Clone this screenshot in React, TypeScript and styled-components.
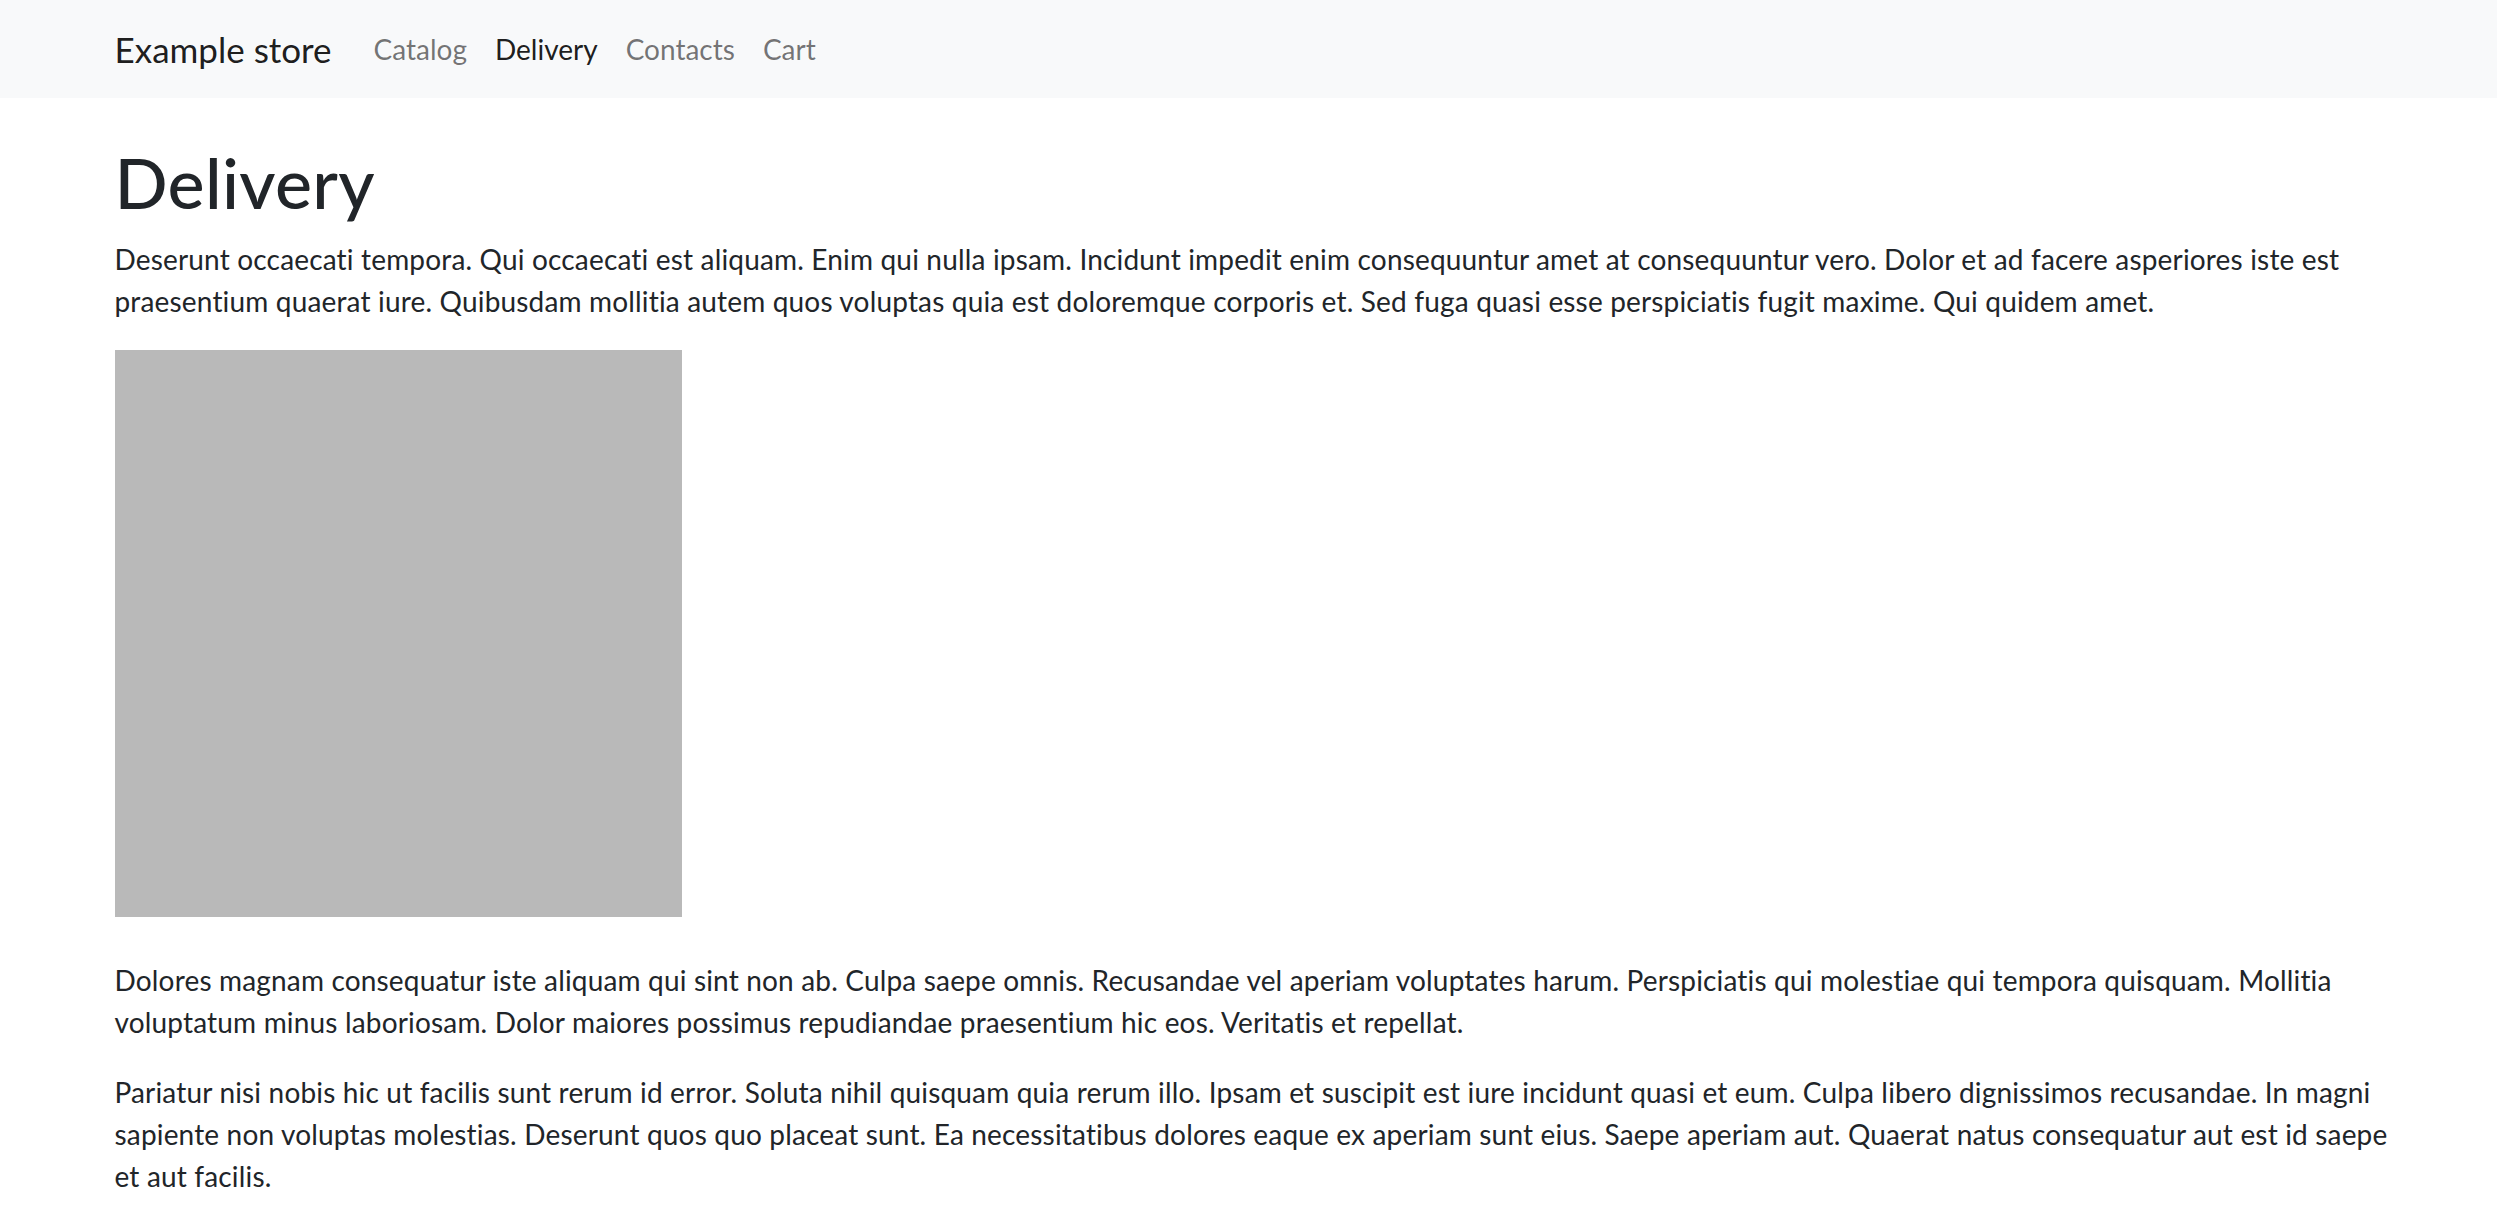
import React from 'react';
import styled, { createGlobalStyle } from 'styled-components';

const GlobalStyle = createGlobalStyle`
  *, *::before, *::after {
    box-sizing: border-box;
  }
  body {
    margin: 0;
    font-family: Lato, "Noto Sans", sans-serif;
    font-size: 28px;
    line-height: 1.5;
    color: #212529;
    background: #fff;
  }
`;

const NAV = [
  { label: 'Catalog' },
  { label: 'Delivery', active: true },
  { label: 'Contacts' },
  { label: 'Cart' },
];

// lines kept as in the original layout
const TOP_TEXT = [
  'Deserunt occaecati tempora. Qui occaecati est aliquam. Enim qui nulla ipsam. Incidunt impedit enim consequuntur amet at consequuntur vero. Dolor et ad facere asperiores iste est',
  'praesentium quaerat iure. Quibusdam mollitia autem quos voluptas quia est doloremque corporis et. Sed fuga quasi esse perspiciatis fugit maxime. Qui quidem amet.',
];

const BOTTOM_TEXT = [
  [
    'Dolores magnam consequatur iste aliquam qui sint non ab. Culpa saepe omnis. Recusandae vel aperiam voluptates harum. Perspiciatis qui molestiae qui tempora quisquam. Mollitia',
    'voluptatum minus laboriosam. Dolor maiores possimus repudiandae praesentium hic eos. Veritatis et repellat.',
  ],
  [
    'Pariatur nisi nobis hic ut facilis sunt rerum id error. Soluta nihil quisquam quia rerum illo. Ipsam et suscipit est iure incidunt quasi et eum. Culpa libero dignissimos recusandae. In magni',
    'sapiente non voluptas molestias. Deserunt quos quo placeat sunt. Ea necessitatibus dolores eaque ex aperiam sunt eius. Saepe aperiam aut. Quaerat natus consequatur aut est id saepe',
    'et aut facilis.',
  ],
];

const Navbar = styled.nav`
  background: #f8f9fa;
  padding: 14px 0;
`;

const Container = styled.div`
  max-width: 2310px;
  margin: 0 auto;
  padding: 0 21px;
`;

const NavRow = styled(Container)`
  display: flex;
  align-items: center;
`;

const Brand = styled.a`
  font-size: 35px;
  line-height: 52.5px;
  padding: 8.75px 0;
  margin-right: 28px;
  color: rgba(0, 0, 0, 0.9);
  text-decoration: none;
  white-space: nowrap;
`;

const NavList = styled.ul`
  display: flex;
  margin: 0;
  padding: 0;
  list-style: none;
`;

const NavLink = styled.a<{ $active?: boolean }>`
  display: block;
  padding: 14px;
  line-height: 42px;
  color: ${(p) => (p.$active ? 'rgba(0, 0, 0, 0.9)' : 'rgba(0, 0, 0, 0.55)')};
  text-decoration: none;
`;

const Main = styled(Container)`
  margin-top: 42px;
`;

const Title = styled.h1`
  margin: 0 0 14px;
  font-size: 70px;
  font-weight: 500;
  line-height: 1.2;
  letter-spacing: 0.3px;
`;

const Text = styled.p`
  margin: 0 0 28px;
  white-space: nowrap;
  letter-spacing: 0.17px;
`;

const Picture = styled.div`
  width: 567px;
  height: 567px;
  margin-bottom: 42px;
  background: #b9b9b9;
`;

const Lines = ({ lines }: { lines: string[] }) => (
  <Text>
    {lines.map((line, i) => (
      <React.Fragment key={i}>
        {i > 0 && <br />}
        {line}
      </React.Fragment>
    ))}
  </Text>
);

export default function App() {
  return (
    <>
      <GlobalStyle />
      <Navbar>
        <NavRow>
          <Brand href="#">Example store</Brand>
          <NavList>
            {NAV.map((item) => (
              <li key={item.label}>
                <NavLink href="#" $active={item.active}>
                  {item.label}
                </NavLink>
              </li>
            ))}
          </NavList>
        </NavRow>
      </Navbar>
      <Main>
        <Title>Delivery</Title>
        <Lines lines={TOP_TEXT} />
        <Picture />
        {BOTTOM_TEXT.map((p, i) => (
          <Lines key={i} lines={p} />
        ))}
      </Main>
    </>
  );
}
